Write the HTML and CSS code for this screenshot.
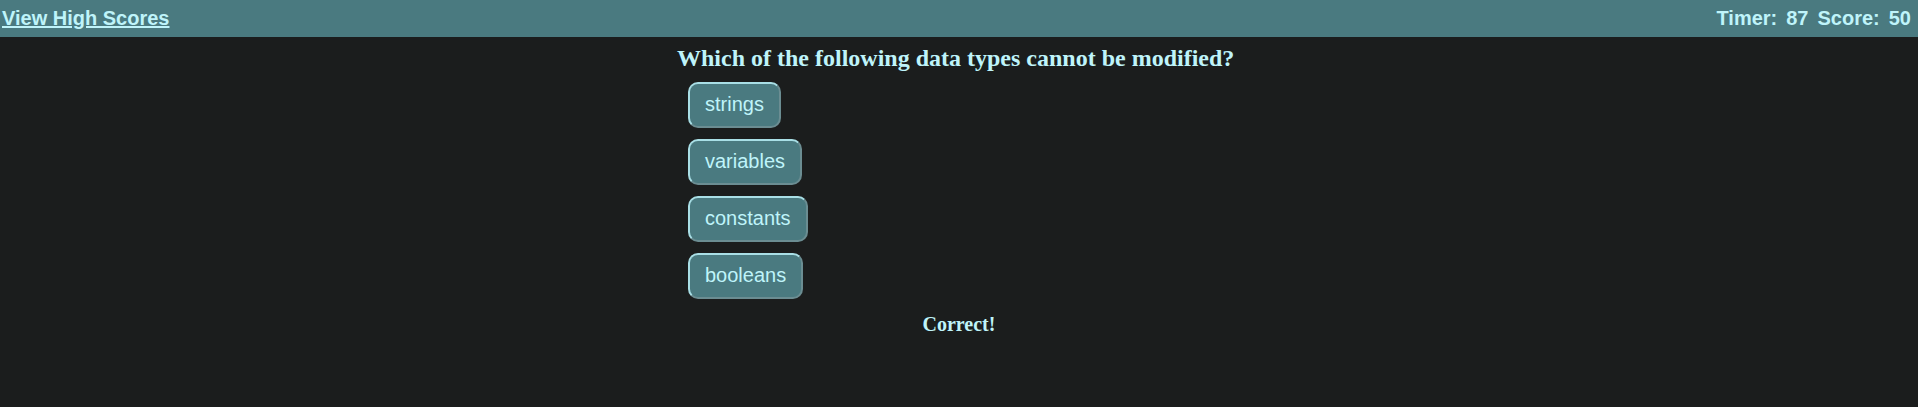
FILE: index.html
```html
<!DOCTYPE html>
<html>
<head>
<meta charset="utf-8">
<link rel="stylesheet" href="styles.css">
</head>
<body>
<header class="topbar">
  <a class="scores-link" href="#">View High Scores</a>
  <div class="stats">
    <span>Timer:</span><span>87</span><span>Score:</span><span>50</span>
  </div>
</header>
<main class="quiz">
  <h2 class="question">Which of the following data types cannot be modified?</h2>
  <div class="answers">
    <button class="answer">strings</button>
    <button class="answer">variables</button>
    <button class="answer">constants</button>
    <button class="answer">booleans</button>
  </div>
</main>
<p class="result">Correct!</p>
</body>
</html>
```
FILE: styles.css
```css
html, body {
  margin: 0;
  padding: 0;
  background: #1b1d1d;
  color: #bff4fa;
}
body {
  font-family: "Liberation Serif", serif;
  height: 407px;
}
.topbar {
  display: flex;
  justify-content: space-between;
  align-items: center;
  height: 37px;
  background: #4a7a80;
  padding: 0 7px 0 2px;
  font-family: "Liberation Sans", Arial, sans-serif;
  font-weight: bold;
  font-size: 20px;
}
.scores-link {
  color: #bff4fa;
  text-decoration: underline;
}
.stats {
  display: flex;
  gap: 9px;
}
.quiz {
  width: 564px;
  margin: 0 auto;
  padding-top: 8px;
}
.question {
  margin: 0;
  font-size: 24px;
  font-weight: bold;
  line-height: 27px;
}
.answers {
  display: flex;
  flex-direction: column;
  align-items: flex-start;
  gap: 11px;
  padding-left: 11px;
  margin-top: 10px;
}
.answer {
  font-family: "Liberation Sans", Arial, sans-serif;
  font-size: 20px;
  color: #bff4fa;
  background: #4a7a80;
  border: 2px outset #a9dfe6;
  border-radius: 10px;
  padding: 9px 15px 10px;
  line-height: 23px;
}
.result {
  text-align: center;
  margin: 14px 0 0;
  font-size: 20px;
  font-weight: bold;
}
```
